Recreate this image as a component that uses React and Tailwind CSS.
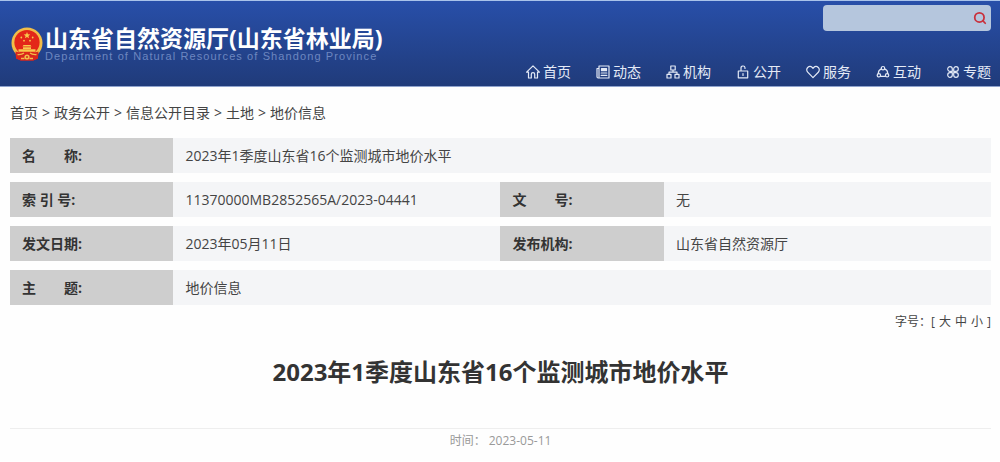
import React from 'react';
import { Search } from 'lucide-react';

const NAV_ITEMS = [
  { label: '首页', Icon: HomeIcon },
  { label: '动态', Icon: NewsIcon },
  { label: '机构', Icon: OrgIcon },
  { label: '公开', Icon: UnlockIcon },
  { label: '服务', Icon: HeartIcon },
  { label: '互动', Icon: InteractIcon },
  { label: '专题', Icon: TopicIcon },
];

const CRUMBS = ['首页', '政务公开', '信息公开目录', '土地', '地价信息'];

// each row holds one or two label / value pairs
const META_ROWS = [
  [['名\u3000\u3000称:', '2023年1季度山东省16个监测城市地价水平']],
  [['索 引 号:', '11370000MB2852565A/2023-04441'], ['文\u3000\u3000号:', '无']],
  [['发文日期:', '2023年05月11日'], ['发布机构:', '山东省自然资源厅']],
  [['主\u3000\u3000题:', '地价信息']],
];

function NavSvg({ children }) {
  return (
    <svg viewBox="0 0 14 14" className="w-3.5 h-3.5 shrink-0" fill="none" stroke="currentColor" strokeWidth="1.2" strokeLinejoin="round" strokeLinecap="round" aria-hidden="true">
      {children}
    </svg>
  );
}

function HomeIcon() {
  return (
    <NavSvg>
      <path d="M2.5 7.2H.6L7 .8l6.4 6.4H11.500V13H8.700V9.300a1.700 1.700 0 0 0-3.400 0V13H2.500z" />
    </NavSvg>
  );
}

function NewsIcon() {
  return (
    <NavSvg>
      <path d="M3 1h10v12H2.200A1.200 1.200 0 0 1 1 11.800V3.500h2V1zM3 3.500V12" />
      <path d="M5.500 3.500h5v2.200h-5z" fill="currentColor" />
      <path d="M5.200 8h5.600M5.200 10.400h5.600" />
    </NavSvg>
  );
}

function OrgIcon() {
  return (
    <NavSvg>
      <path d="M4.800 1h4.400v4H4.800zM1 9.300h4v3.700H1zM9 9.300h4v3.700H9zM7 5v2.200M3 9.300V7.200h8v2.100" />
    </NavSvg>
  );
}

function UnlockIcon() {
  return (
    <NavSvg>
      <path d="M2.300 6h9.400v6.800H2.300zM5 6V3.200a2 2 0 0 1 4-.4V3.500M7 8.600v1.800" />
    </NavSvg>
  );
}

function HeartIcon() {
  return (
    <NavSvg>
      <path d="M7 12.600 1.700 7.200a3.300 3.300 0 0 1 0-4.700 3.300 3.300 0 0 1 4.600 0l.7.8.7-.8a3.300 3.300 0 0 1 4.600 0 3.300 3.300 0 0 1 0 4.700z" />
    </NavSvg>
  );
}

function InteractIcon() {
  return (
    <NavSvg>
      <circle cx="7" cy="3.200" r="1.700" />
      <circle cx="2.900" cy="10.300" r="1.700" />
      <circle cx="11.100" cy="10.300" r="1.700" />
      <path d="M5.300 3.900A5 5 0 0 0 2.300 8.600M8.700 3.900a5 5 0 0 1 3 4.700M4.800 11.400h4.400" />
    </NavSvg>
  );
}

function TopicIcon() {
  return (
    <NavSvg>
      <path d="M6.300 6.300H4A2.300 2.300 0 1 1 6.300 4zM7.700 6.300V4A2.300 2.300 0 1 1 10 6.300zM6.300 7.700V10A2.300 2.300 0 1 1 4 7.700zM7.700 7.700H10A2.300 2.300 0 1 1 7.700 10z" />
    </NavSvg>
  );
}

function Emblem() {
  return (
    <svg viewBox="0 0 32 34" className="w-8 h-[34px] shrink-0" aria-hidden="true">
      <path d="M4.500 23h23l-.6 8.500-4.600 2H9.700l-4.600-2z" fill="#d9261c" />
      <circle cx="16" cy="16" r="15.500" fill="#f1bd48" />
      <circle cx="16" cy="15.500" r="12.600" fill="#e32619" />
      <path d="m16 5 .9 2.300 2.400.1-1.900 1.500.7 2.400-2.100-1.400-2.100 1.400.7-2.400-1.900-1.500 2.400-.1z" fill="#f8c94c" />
      <g fill="#f8c94c">
        <circle cx="10.300" cy="10.500" r=".9" />
        <circle cx="21.700" cy="10.500" r=".9" />
        <circle cx="13" cy="13.700" r=".9" />
        <circle cx="19" cy="13.700" r=".9" />
        <path d="M12.500 18h7l1 1.500h-9zM12 20.200h8V22h-8zM7.500 22.300h17v2.400h-17z" />
      </g>
      <path d="M4.500 24.500c3.500 1 7 1.200 8.500.8l3 2.200 3-2.200c1.500.4 5 .2 8.500-.8l-.6 7-4.600 2H9.700l-4.600-2z" fill="#d9261c" />
      <path d="M6.500 27.500c3 .2 5-.2 6.500-1.500M25.500 27.500c-3 .2-5-.2-6.500-1.500M10 31.500h3.500M18.500 31.500H22" fill="none" stroke="#f1bd48" strokeWidth="1.300" />
      <circle cx="16" cy="30" r="2.600" fill="#f1bd48" />
      <circle cx="16" cy="30" r="1" fill="#d9261c" />
    </svg>
  );
}

function SiteHeader() {
  return (
    <header className="border-t border-[#a9c3ea] border-b border-b-[#8fa3cd] bg-linear-to-b from-[#284fa9] to-[#203b7a] text-white flex items-stretch justify-between pr-[9px]">
      <a href="#" className="flex items-center gap-0.5 pl-[11px]">
        <Emblem />
        <span className="flex flex-col">
          <span className="text-[23px] leading-6 font-bold whitespace-nowrap">山东省自然资源厅(山东省林业局)</span>
          <span className="font-['Liberation_Sans',sans-serif] text-[11px] leading-3 tracking-widest whitespace-nowrap text-[#6d87c0]">
            Department of Natural Resources of Shandong Province
          </span>
        </span>
      </a>

      <div className="flex flex-col items-end justify-between gap-[31px] py-1">
        <form role="search" className="flex items-center w-[168px] h-[26px] rounded-sm bg-[#b5c6dd] pr-1" onSubmit={(e) => e.preventDefault()}>
          <input type="search" aria-label="搜索" className="flex-1 min-w-0 h-full bg-transparent px-2 text-sm text-[#333333] outline-none" />
          <button type="submit" aria-label="搜索" className="text-[#c9303c]">
            <Search className="w-3.5 h-3.5" strokeWidth={3} />
          </button>
        </form>
        <nav className="flex gap-[25px]">
          {NAV_ITEMS.map(({ label, Icon }) => (
            <a key={label} href="#" className="flex items-center gap-[3px] text-sm text-[#e4eaf6] whitespace-nowrap">
              <Icon />
              {label}
            </a>
          ))}
        </nav>
      </div>
    </header>
  );
}

function Breadcrumb() {
  return (
    <nav aria-label="当前位置" className="flex flex-wrap items-center gap-1 text-sm">
      {CRUMBS.map((crumb, i) => (
        <React.Fragment key={crumb}>
          {i > 0 && <span>&gt;</span>}
          <a href="#">{crumb}</a>
        </React.Fragment>
      ))}
    </nav>
  );
}

function MetaTable() {
  return (
    <table className="w-full table-fixed border-separate border-spacing-x-0 border-spacing-y-[9px] mt-[6px] text-sm">
      <colgroup>
        <col className="w-1/6" />
        <col className="w-1/3" />
        <col className="w-1/6" />
        <col className="w-1/3" />
      </colgroup>
      <tbody>
        {META_ROWS.map((pairs) => (
          <tr key={pairs[0][0]}>
            {pairs.map(([label, value]) => (
              <React.Fragment key={label}>
                <th scope="row" className="h-[35px] bg-[#cecece] px-3 text-left font-bold text-[#333333]">{label}</th>
                <td colSpan={pairs.length === 1 ? 3 : 1} className="bg-[#f4f5f7] px-3">{value}</td>
              </React.Fragment>
            ))}
          </tr>
        ))}
      </tbody>
    </table>
  );
}

export default function App() {
  return (
    <div className="bg-[#fefefe] text-[#444444] font-['Open_Sans','Noto_Sans_CJK_SC',sans-serif]">
      <SiteHeader />
      <main className="pl-[10px] pr-[9px] pt-4 pb-3">
        <Breadcrumb />
        <MetaTable />

        {/* font size switch */}
        <div className="flex justify-end gap-1 text-xs">
          <span>字号：[</span>
          <button type="button">大</button>
          <button type="button">中</button>
          <button type="button">小</button>
          <span>]</span>
        </div>

        <h1 className="mt-[26px] text-center text-2xl font-bold text-[#333333]">2023年1季度山东省16个监测城市地价水平</h1>
        <p className="mt-10 border-t border-[#eeeeee] pt-1 text-center text-xs text-[#999999]">时间： 2023-05-11</p>
      </main>
    </div>
  );
}
